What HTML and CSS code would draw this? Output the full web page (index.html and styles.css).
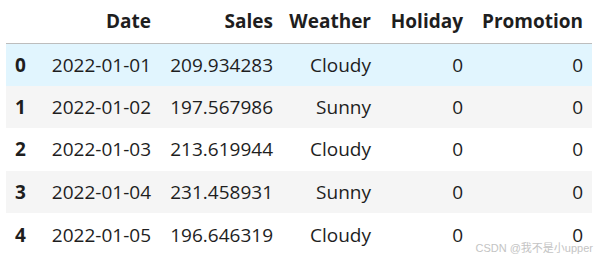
FILE: index.html
```html
<!DOCTYPE html>
<html>
<head>
<meta charset="utf-8">
<link rel="stylesheet" href="styles.css">
</head>
<body>
<div class="frame">
  <table class="df">
    <thead>
      <tr>
        <th class="c-idx"></th>
        <th class="c-date">Date</th>
        <th class="c-sales">Sales</th>
        <th class="c-weather">Weather</th>
        <th class="c-hol">Holiday</th>
        <th class="c-promo">Promotion</th>
      </tr>
    </thead>
    <tbody>
      <tr class="hover">
        <th>0</th><td>2022-01-01</td><td>209.934283</td><td>Cloudy</td><td>0</td><td>0</td>
      </tr>
      <tr class="odd">
        <th>1</th><td>2022-01-02</td><td>197.567986</td><td>Sunny</td><td>0</td><td>0</td>
      </tr>
      <tr>
        <th>2</th><td>2022-01-03</td><td>213.619944</td><td>Cloudy</td><td>0</td><td>0</td>
      </tr>
      <tr class="odd">
        <th>3</th><td>2022-01-04</td><td>231.458931</td><td>Sunny</td><td>0</td><td>0</td>
      </tr>
      <tr>
        <th>4</th><td>2022-01-05</td><td>196.646319</td><td>Cloudy</td><td>0</td><td>0</td>
      </tr>
    </tbody>
  </table>
  <div class="watermark">CSDN @我不是小upper</div>
</div>
</body>
</html>
```

FILE: styles.css
```css
html, body {
  margin: 0;
  padding: 0;
  background: #ffffff;
}

.frame {
  position: relative;
  width: 596px;
  height: 260px;
  padding-left: 6px;
  box-sizing: border-box;
  overflow: hidden;
}

.df {
  border-collapse: collapse;
  table-layout: fixed;
  width: 586px;
  font-family: "Open Sans", "Noto Sans", sans-serif;
  font-size: 19px;
  color: #1e1e1e;
}

.df th,
.df td {
  padding: 0 9px 0 0;
  text-align: right;
  white-space: nowrap;
  height: 42.6px;
  box-sizing: border-box;
}

.df th {
  font-weight: 700;
}

.df td {
  font-weight: 400;
}

.df thead th {
  height: 43px;
  border-bottom: 1px solid #bdbdbd;
  vertical-align: middle;
}

.c-idx { width: 31px; }
.c-date { width: 123px; }
.c-sales { width: 122px; }
.c-weather { width: 98px; }
.c-hol { width: 92px; }
.c-promo { width: 120px; }

.df tbody th {
  text-align: left;
  padding-left: 9px;
}

.df tbody tr.odd {
  background: #f5f5f5;
}

.df tbody tr.hover {
  background: #e1f5fe;
}

.watermark {
  position: absolute;
  right: 3px;
  bottom: 5px;
  font-family: "Liberation Sans", "Noto Sans CJK SC", sans-serif;
  font-size: 11px;
  color: #c4c4c4;
  white-space: nowrap;
}
```
